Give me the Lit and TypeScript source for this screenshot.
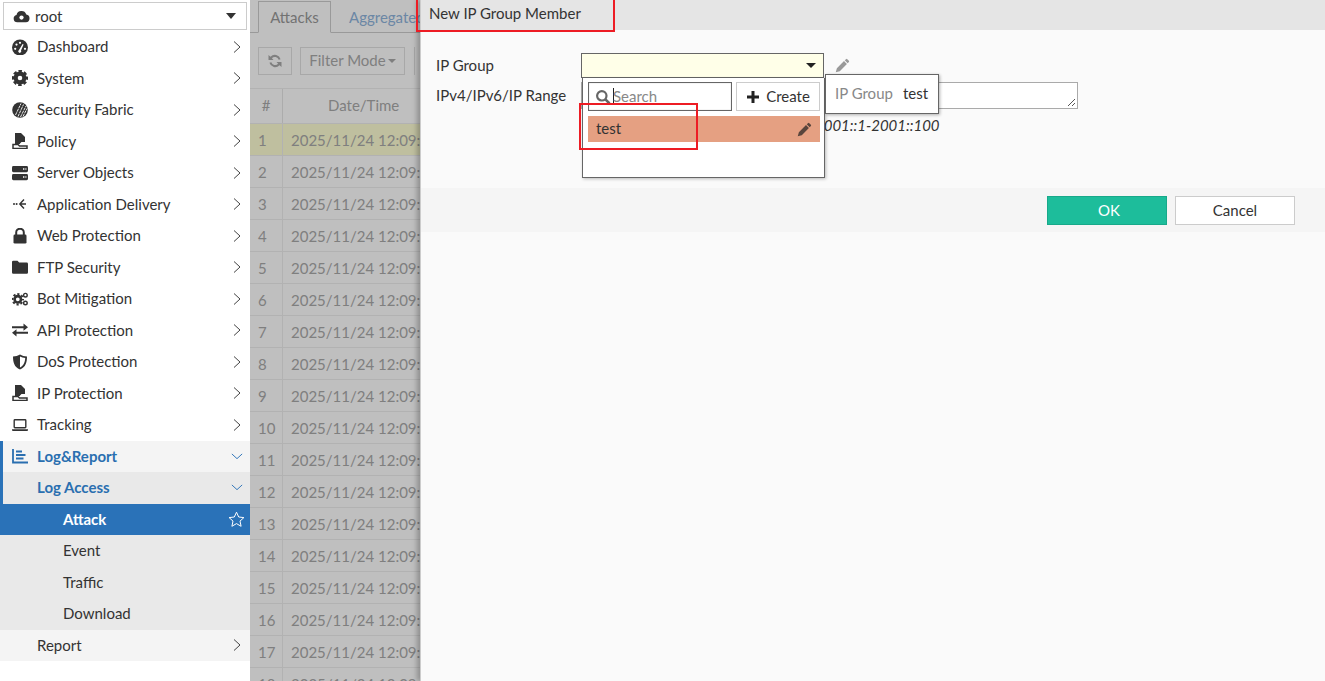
import { LitElement, html, css, svg } from "lit";
import { customElement } from "lit/decorators.js";

const icons: Record<string, any> = {
  dash: svg`<circle cx="8" cy="8.500" r="8" fill="currentColor"/><g fill="#fff"><circle cx="3.200" cy="9.800" r="1.100"/><circle cx="4.500" cy="5.600" r="1.100"/><circle cx="8" cy="3.800" r="1.100"/><circle cx="13" cy="9.800" r="1.100"/><path d="M7 11 10.600 5l1 .5L9 11.500a1.500 1.500 0 1 1-2-.5z"/></g>`,
  cog: svg`<circle cx="8" cy="8" r="4.400" fill="none" stroke="currentColor" stroke-width="4.200"/><circle cx="8" cy="8" r="6.900" fill="none" stroke="currentColor" stroke-width="2.400" stroke-dasharray="3.400 2.020" stroke-dashoffset="1.700"/>`,
  fabric: svg`<circle cx="8" cy="8" r="7.800" fill="currentColor"/><path d="M3.500 13 9 1.500M6 14.500 11.500 2.500M8.500 15 14 4M11 14.500l4-8" stroke="#fff" stroke-width=".9" stroke-dasharray="3 .7" fill="none"/>`,
  policy: svg`<path d="M3 0h6l4 4v5H9.500L8 10.500H3z" fill="currentColor"/><path d="M1 11.500h5l1.500 1.500H15v2.500H1z" fill="none" stroke="currentColor" stroke-width="1.500"/><path d="M3 9h5v2H3z" fill="currentColor"/>`,
  server: svg`<rect x="0" y="1" width="16" height="6.200" rx="1.400" fill="currentColor"/><rect x="0" y="9" width="16" height="6.200" rx="1.400" fill="currentColor"/><path d="M11 3.200h1.400v1.500H11zM13.400 3.200h1v1.500h-1zM11 11.300h1.400v1.500H11zM13.400 11.300h1v1.500h-1z" fill="#fff"/>`,
  app: svg`<circle cx="2" cy="8" r="1" fill="currentColor"/><circle cx="4.600" cy="8" r="1" fill="currentColor"/><path d="M12 3.500 7.800 8l4.200 4.500M8 8H14" fill="none" stroke="currentColor" stroke-width="1.400"/>`,
  lock: svg`<path d="M4.200 7V4.500a3.800 3.800 0 0 1 7.600 0V7" fill="none" stroke="currentColor" stroke-width="2"/><rect x="1.500" y="6.600" width="13" height="9" rx="1.300" fill="currentColor"/>`,
  folder: svg`<path d="M0 3a1.300 1.300 0 0 1 1.300-1.300h4.200L7.200 3.600h7.500A1.300 1.300 0 0 1 16 4.900v8.500a1.300 1.300 0 0 1-1.300 1.300H1.300A1.300 1.300 0 0 1 0 13.400z" fill="currentColor"/>`,
  bot: svg`<circle cx="5.800" cy="8.300" r="3.200" fill="none" stroke="currentColor" stroke-width="2.600"/><circle cx="5.800" cy="8.300" r="5.200" fill="none" stroke="currentColor" stroke-width="2" stroke-dasharray="2.200 1.880" stroke-dashoffset="1.100"/><circle cx="13.400" cy="4.200" r="1.800" fill="none" stroke="currentColor" stroke-width="1.400"/><circle cx="13.400" cy="12" r="1.800" fill="none" stroke="currentColor" stroke-width="1.400"/>`,
  api: svg`<path d="M0 4.200h11.500V1.600L16 5.200l-4.500 3.600V6.200H0zM16 9.800H4.500V7.200L0 10.800l4.500 3.600v-2.600H16z" fill="currentColor"/>`,
  shield: svg`<path d="M8 .5C6 1.800 3.500 2.400 1 2.400c0 6 1.300 10.500 7 13.100 5.700-2.600 7-7.100 7-13.100-2.500 0-5-.6-7-1.900z" fill="currentColor"/><path d="M8 2.500v11c-3.800-2-5-5.200-5.200-9.500C4.800 3.900 6.500 3.400 8 2.500z" fill="#fff" transform="matrix(-1 0 0 1 16 0)"/>`,
  laptop: svg`<rect x="2.200" y="2.800" width="11.600" height="8" rx=".7" fill="none" stroke="currentColor" stroke-width="1.400"/><path d="M0 12.200h16v.8a1 1 0 0 1-1 1H1a1 1 0 0 1-1-1z" fill="currentColor"/>`,
  chart: svg`<path d="M1 1v13.500h15" fill="none" stroke="currentColor" stroke-width="1.800"/><path d="M4 2.500h6v2H4zM4 6h9.500v2H4zM4 9.500h7.500v2H4z" fill="currentColor"/>`,
};

const pencil = svg`<path d="M11.700 1.200a1 1 0 0 1 1.400 0l1.700 1.700a1 1 0 0 1 0 1.400L13.500 5.600 10.400 2.500zM9.600 3.300l3.100 3.100-7.600 7.600-4.300 1.300 1.200-4.400z" fill="currentColor"/>`;

type Item = { label: string; icon?: string };
const top: Item[] = [
  { label: "Dashboard", icon: "dash" },
  { label: "System", icon: "cog" },
  { label: "Security Fabric", icon: "fabric" },
  { label: "Policy", icon: "policy" },
  { label: "Server Objects", icon: "server" },
  { label: "Application Delivery", icon: "app" },
  { label: "Web Protection", icon: "lock" },
  { label: "FTP Security", icon: "folder" },
  { label: "Bot Mitigation", icon: "bot" },
  { label: "API Protection", icon: "api" },
  { label: "DoS Protection", icon: "shield" },
  { label: "IP Protection", icon: "policy" },
  { label: "Tracking", icon: "laptop" },
];

const chevR = html`<svg class="chev" viewBox="0 0 10 14" width="10" height="14"><path d="M2 1.500 8 7l-6 5.500" fill="none" stroke="currentColor" stroke-width="1"/></svg>`;
const chevD = html`<svg class="chev down" viewBox="0 0 14 10" width="12" height="9"><path d="M1 2l6 5.500L13 2" fill="none" stroke="currentColor" stroke-width="1.100"/></svg>`;

@customElement("app-root")
export class AppRoot extends LitElement {
  static styles = css`
    :host { display: flex; width: 1325px; height: 681px; overflow: hidden; position: relative;
      font-family: Lato, "Liberation Sans", sans-serif; font-size: 15px; color: #333; background: #fff; }
    * { box-sizing: border-box; }

    .side { width: 250px; flex: none; background: #fff; padding-top: 2px; }
    .vdom { height: 28px; margin: 0 3px 1px 3px; border: 1px solid #ccc; display: flex; align-items: center; padding: 0 9px; gap: 5px; background: #fff; color: #333; }
    .vdom svg.cloud { width: 17px; height: 15px; color: #333; }
    .vdom span { flex: 1; }
    .vdom .caret { width: 0; height: 0; border-left: 5px solid transparent; border-right: 5px solid transparent; border-top: 6px solid #333; margin-right: 1px; }
    .row { height: 31.5px; display: flex; align-items: center; padding-left: 12px; color: #333; }
    .row .ic { width: 16px; height: 16px; flex: none; margin-right: 9px; color: #333; }
    .row .lb { flex: 1; white-space: nowrap; margin-top: -1px; }
    .chev { color: #444; margin-right: 8px; flex: none; }
    .chev.down { margin-right: 7px; color: #2a72b8; }
    .group { background: #f4f4f4; }
    .blue { color: #2a6fb0; font-weight: 700; }
    .blue .ic { color: #2a6fb0; }
    .marked { border-left: 3px solid #2a72b8; padding-left: 9px; }
    .l2 { background: #e9e9e9; }
    .l2 .lb.in { padding-left: 25px; }
    .l3 { padding-left: 63px; background: #e9e9e9; }
    .active { background: #2a72b8; color: #fff; font-weight: 700; }
    .star { width: 17px; height: 17px; margin-right: 5px; flex: none; }
    .lb.rep { padding-left: 25px; }

    .main { flex: 1; position: relative; overflow: hidden; background: #fff; }
    .tabs { height: 33px; display: flex; align-items: flex-end; padding-left: 8px; gap: 0; border-bottom: 1px solid #ccc; }
    .tab { height: 32px; padding: 0 11px 0 18px; display: flex; align-items: center; margin-bottom: -1px; white-space: nowrap; color: #8fb4dc; }
    .tab.on { border: 1px solid #ccc; border-bottom: 1px solid #fff; color: #999; background: #fff; width: 73px; justify-content: center; padding: 0; }
    .tools { height: 55px; display: flex; align-items: center; padding: 0 8px; gap: 8px; }
    .btn { height: 28px; border: 1px solid #e0e0e0; display: flex; align-items: center; justify-content: center; color: #aaa; white-space: nowrap; padding-bottom: 2px; }
    .btn.r { width: 34px; padding: 0; }
    .btn.f { width: 105px; gap: 2px; }
    .btn .tri { width: 0; height: 0; border-left: 4px solid transparent; border-right: 4px solid transparent; border-top: 4px solid #aaa; margin-top: 2px; }
    .sep { width: 1px; height: 28px; background: #e0e0e0; margin-left: 1px; }
    .thead, .tr { display: grid; grid-template-columns: 33px 1fr; }
    .thead { height: 36px; border-top: 1px solid #eee; border-bottom: 1px solid #eee; }
    .thead div { display: flex; align-items: center; justify-content: center; color: #aaa; border-right: 1px solid #e6e6e6; padding-bottom: 2px; }
    .thead .dt { border: none; justify-content: flex-start; padding-left: 45px; }
    .tr { height: 32px; border-bottom: 1px solid #eee; align-items: center; color: #aaa; font-size: 15px; }
    .tr .n { padding-left: 8px; border-right: 1px solid #eee; height: 100%; display: flex; align-items: center; }
    .tr .d { padding-left: 8px; white-space: nowrap; }
    .tr.sel { background: #ffffd4; }
    .dim { position: absolute; inset: 0; background: rgba(0, 0, 0, .25); }

    .modal { position: absolute; left: 170px; top: 0; right: 0; bottom: 0; background: #fafafa; border-left: 1px solid #ccc;
      box-shadow: -3px 0 5px rgba(0, 0, 0, .25); display: flex; flex-direction: column; }
    .mhead { height: 30px; flex: none; background: #e5e5e5; display: flex; align-items: center; padding: 0 0 5px 8px; font-size: 15px; color: #333; }
    .mbody { height: 158px; flex: none; padding: 23px 0 0 15px; position: relative; }
    .frow { display: grid; grid-template-columns: 145px 1fr; align-items: center; }
    .frow > span { margin-top: -2px; }
    .frow.a { height: 25px; }
    .frow.b { height: 27px; margin-top: 4px; }
    .sel-box { width: 243px; height: 25px; background: #ffffe8; border: 1px solid #666; display: flex; align-items: center; justify-content: flex-end; padding-right: 7px; }
    .sel-box i { width: 0; height: 0; border-left: 5px solid transparent; border-right: 5px solid transparent; border-top: 5px solid #222; }
    .with-pen { display: flex; align-items: center; gap: 11px; }
    .pen { width: 15px; height: 15px; color: #999; }
    .ta { width: 497px; height: 27px; border: 1px solid #aaa; background: #fff; position: relative; }
    .ta svg { position: absolute; right: 1px; bottom: 1px; }
    .hint { font-style: italic; margin: 7px 0 0 379px; color: #333; white-space: nowrap; }

    .drop { position: absolute; left: 161px; top: 48px; width: 243px; height: 100px; background: #fff; border: 1px solid #666; border-top: none;
      box-shadow: 1px 1px 3px rgba(0, 0, 0, .25); padding: 4px 4px 0 5px; }
    .dtop { display: flex; gap: 4px; }
    .search { width: 144px; height: 29px; border: 1px solid #666; background: #fff; display: flex; align-items: center; padding: 0 0 2px 6px; color: #888; box-shadow: inset 0 0 1px #999; }
    .search svg { width: 16px; height: 16px; color: #666; flex: none; margin-top: 2px; }
    .cursor { width: 1px; height: 17px; background: #222; margin: 2px -1px 0 2px; }
    .create { width: 84px; height: 29px; border: 1px solid #ccc; display: flex; align-items: center; justify-content: center; gap: 6px; color: #333; background: #fff; padding-bottom: 2px; }
    .create svg { width: 14px; height: 14px; color: #222; margin-top: 2px; }
    .opt { height: 26px; width: 232px; margin-top: 5px; background: #e5a082; display: flex; align-items: center; justify-content: space-between; padding: 0 8px; color: #333; }
    .opt span { margin-top: -2px; }
    .opt svg { width: 15px; height: 15px; color: #59453c; }
    .tip { position: absolute; left: 404px; top: 44px; width: 114px; height: 40px; background: #fff; border: 1px solid #666; box-shadow: 1px 1px 3px rgba(0, 0, 0, .3);
      display: flex; align-items: center; padding: 0 0 2px 9px; gap: 10px; }
    .tip .k { color: #888; }
    .mfoot { height: 44px; flex: none; background: #f5f5f5; display: flex; align-items: center; justify-content: flex-end; padding-right: 30px; gap: 8px; }
    .ok, .cancel { width: 120px; height: 29px; display: flex; align-items: center; justify-content: center; }
    .ok { background: #1dbd9b; color: #fff; border: 1px solid #18a98a; padding-left: 4px; }
    .cancel { background: #fff; border: 1px solid #ccc; color: #333; }

    .redbox { position: absolute; border: 2px solid #ed1c24; pointer-events: none; }
    .r1 { left: 416px; top: -4px; width: 199px; height: 36px; }
    .r2 { left: 579px; top: 103px; width: 119px; height: 47px; }
  `;

  render() {
    const rows = Array.from({ length: 18 }, (_, i) => i + 1);
    return html`
      <nav class="side">
        <div class="vdom">
          <svg class="cloud" viewBox="0 0 16 14"><path d="M4 12.500a3.500 3.500 0 0 1-.7-6.900A4.800 4.800 0 0 1 12.500 5a3.800 3.800 0 0 1-.3 7.500z" fill="currentColor"/><circle cx="8" cy="8" r="2" fill="#fff"/></svg>
          <span>root</span><i class="caret"></i>
        </div>
        ${top.map((t) => html`<div class="row">
          <svg class="ic" viewBox="0 0 16 16">${icons[t.icon!]}</svg><span class="lb">${t.label}</span>${chevR}
        </div>`)}
        <div class="row group blue marked"><svg class="ic" viewBox="0 0 16 16">${icons.chart}</svg><span class="lb">Log&amp;Report</span>${chevD}</div>
        <div class="row l2 blue marked"><span class="lb in">Log Access</span>${chevD}</div>
        <div class="row l3 active"><span class="lb">Attack</span>
          <svg class="star" viewBox="0 0 17 17"><path d="M8.500 1.200l2.200 4.800 5.200.6-3.900 3.500 1.100 5.200-4.600-2.700-4.600 2.700 1.100-5.200L1.100 6.600l5.200-.6z" fill="none" stroke="#fff" stroke-width="1"/></svg>
        </div>
        <div class="row l3"><span class="lb">Event</span></div>
        <div class="row l3"><span class="lb">Traffic</span></div>
        <div class="row l3"><span class="lb">Download</span></div>
        <div class="row group"><span class="lb rep">Report</span>${chevR}</div>
      </nav>

      <section class="main">
        <div class="tabs"><div class="tab on">Attacks</div><div class="tab">Aggregated Attacks</div></div>
        <div class="tools">
          <div class="btn r"><svg viewBox="0 0 16 16" width="16" height="16"><path d="M13.600 6.200A6 6 0 0 0 3.500 3.700L1.500 2v5h5L4.900 5.300a4 4 0 0 1 6.800 1.500zM2.400 9.800a6 6 0 0 0 10.100 2.500l2 1.700V9h-5l1.600 1.700a4 4 0 0 1-6.800-1.500z" fill="#aaa"/></svg></div>
          <div class="btn f">Filter Mode<span class="tri"></span></div>
          <div class="sep"></div>
        </div>
        <div class="thead"><div>#</div><div class="dt">Date/Time</div></div>
        ${rows.map((n) => html`<div class="tr ${n === 1 ? "sel" : ""}"><div class="n">${n}</div><div class="d">2025/11/24 12:09:41</div></div>`)}
        <div class="dim"></div>

        <div class="modal">
          <div class="mhead">New IP Group Member</div>
          <div class="mbody">
            <div class="frow a"><span>IP Group</span>
              <div class="with-pen"><div class="sel-box"><i></i></div><svg class="pen" viewBox="0 0 16 16">${pencil}</svg></div>
            </div>
            <div class="frow b"><span>IPv4/IPv6/IP Range</span>
              <div class="ta"><svg width="9" height="9" viewBox="0 0 9 9"><path d="M1 8 8 1M5 8l3-3" stroke="#555" stroke-width="1"/></svg></div>
            </div>
            <div class="hint">2001::1-2001::100</div>
            <div class="drop">
              <div class="dtop">
                <div class="search">
                  <svg viewBox="0 0 16 16"><circle cx="6.800" cy="6.800" r="4.700" fill="none" stroke="currentColor" stroke-width="2.200"/><path d="M10.200 10.200 14.500 14.500" stroke="currentColor" stroke-width="2.600"/></svg>
                  <span class="cursor"></span><span>Search</span>
                </div>
                <div class="create"><svg viewBox="0 0 14 14"><path d="M5.500 1h3v4.500H13v3H8.500V13h-3V8.500H1v-3h4.500z" fill="currentColor"/></svg>Create</div>
              </div>
              <div class="opt"><span>test</span><svg viewBox="0 0 16 16">${pencil}</svg></div>
            </div>
            <div class="tip"><span class="k">IP Group</span><span>test</span></div>
          </div>
          <div class="mfoot"><div class="ok">OK</div><div class="cancel">Cancel</div></div>
        </div>
      </section>
      <div class="redbox r1"></div>
      <div class="redbox r2"></div>
    `;
  }
}
